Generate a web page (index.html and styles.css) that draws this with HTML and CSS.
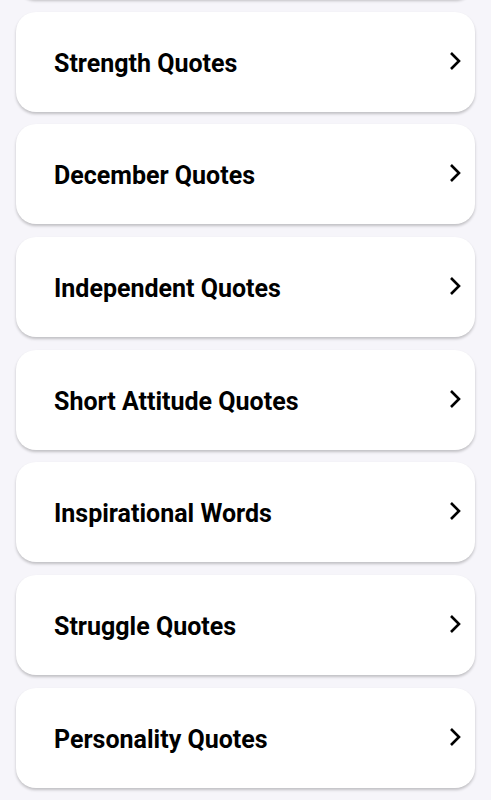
FILE: index.html
```html
<!DOCTYPE html>
<html lang="en">
<head>
    <meta charset="UTF-8">
    <meta name="viewport" content="width=device-width, initial-scale=1.0">
    <title>Quotes Categories</title>
    <link rel="stylesheet" href="styles.css">
</head>
<body>
    <div class="list">
        <div class="card"></div>
        <div class="card"><span class="title">Strength Quotes</span><svg class="chev" viewBox="0 0 12 20"><polyline points="2,2 10,10 2,18"/></svg></div>
        <div class="card"><span class="title">December Quotes</span><svg class="chev" viewBox="0 0 12 20"><polyline points="2,2 10,10 2,18"/></svg></div>
        <div class="card"><span class="title">Independent Quotes</span><svg class="chev" viewBox="0 0 12 20"><polyline points="2,2 10,10 2,18"/></svg></div>
        <div class="card"><span class="title">Short Attitude Quotes</span><svg class="chev" viewBox="0 0 12 20"><polyline points="2,2 10,10 2,18"/></svg></div>
        <div class="card"><span class="title">Inspirational Words</span><svg class="chev" viewBox="0 0 12 20"><polyline points="2,2 10,10 2,18"/></svg></div>
        <div class="card"><span class="title">Struggle Quotes</span><svg class="chev" viewBox="0 0 12 20"><polyline points="2,2 10,10 2,18"/></svg></div>
        <div class="card"><span class="title">Personality Quotes</span><svg class="chev" viewBox="0 0 12 20"><polyline points="2,2 10,10 2,18"/></svg></div>
    </div>
</body>
</html>
```

FILE: styles.css
```css
body {
    margin: 0;
    background-color: #f6f5fa;
    font-family: Roboto, "Liberation Sans", sans-serif;
    height: 800px;
    overflow: hidden;
}
.list {
    display: flex;
    flex-direction: column;
    gap: 12.7px;
    padding: 0 16px;
    margin-top: -101px;
}
.card {
    display: flex;
    align-items: center;
    justify-content: space-between;
    height: 100px;
    padding: 0 14px 0 38px;
    background: #ffffff;
    border-radius: 20px;
    box-shadow: 0 2px 3px rgba(0, 0, 0, 0.22);
}
.title {
    font-size: 25px;
    font-weight: bold;
    color: #000000;
    margin-top: 3px;
}
.chev {
    width: 12px;
    height: 20px;
    fill: none;
    stroke: #000000;
    stroke-width: 2.6;
    margin-bottom: 2px;
}
```
